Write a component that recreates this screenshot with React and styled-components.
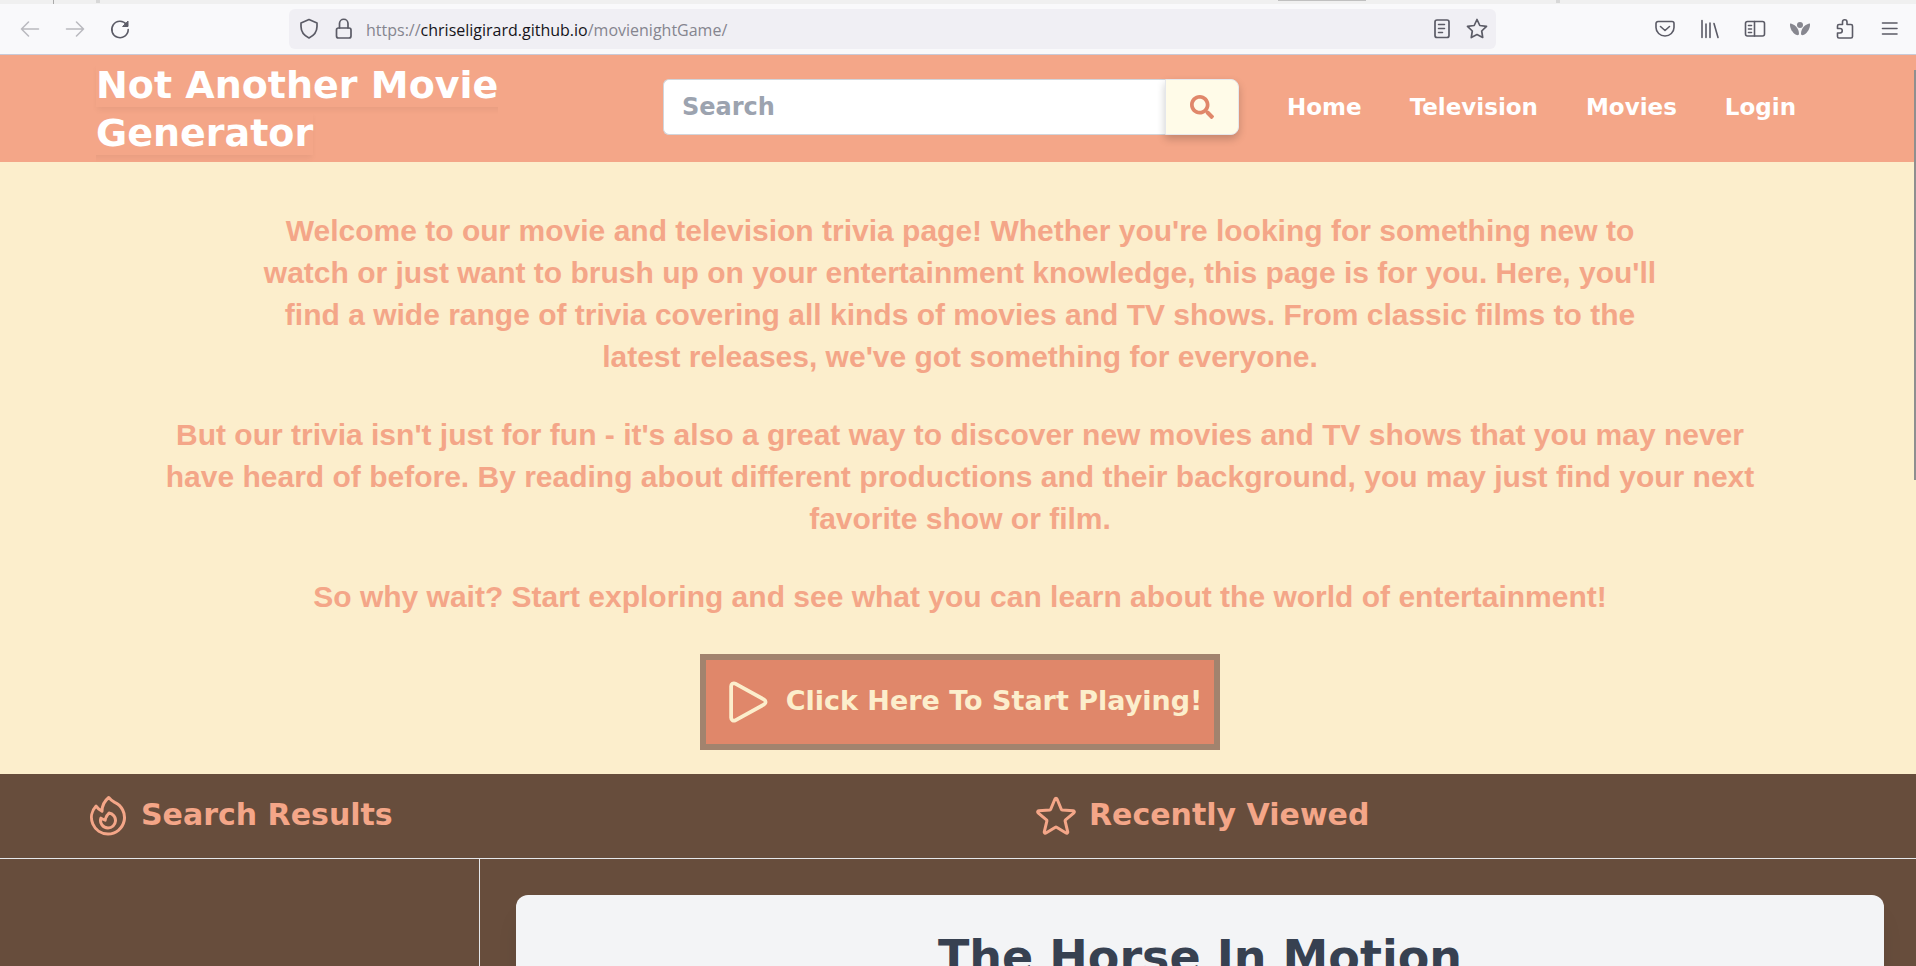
import React from "react";
import styled, { createGlobalStyle } from "styled-components";
import { FaSearch } from "react-icons/fa";

const display = `"DejaVu Sans", Verdana, sans-serif`;

const GlobalStyle = createGlobalStyle`
  *, *::before, *::after { box-sizing: border-box; }
  body { margin: 0; font-family: ${display}; }
  h1, h2, p { margin: 0; }
  button, input { font: inherit; }
`;

const Browser = styled.div`
  display: flex;
  flex-direction: column;
  height: 100vh;
  background: #f9f9fb;
`;

const TabStrip = styled.div`
  display: flex;
  gap: 42px;
  height: 4px;
  padding-left: 53px;
  background: #f0f0f0;
`;

const TabEdge = styled.span`
  width: ${(p) => p.$width}px;
  height: ${(p) => p.$height}px;
  margin-left: ${(p) => (p.$push ? "auto" : 0)};
  margin-right: ${(p) => p.$right || 0}px;
  background: ${(p) => p.$color};
`;

const Toolbar = styled.div`
  display: flex;
  align-items: center;
  height: 51px;
  flex: none;
  padding: 0 14px 0 18px;
  border-bottom: 1px solid #c8cad8;
  color: #5b5b66;
`;

const IconRow = styled.div`
  display: flex;
  flex: none;
  gap: ${(p) => p.$gap}px;
`;

const IconButton = styled.button`
  display: block;
  padding: 0;
  border: 0;
  background: none;
  color: inherit;
  opacity: ${(p) => (p.disabled ? 0.4 : 1)};
  svg { display: block; }
`;

const AddressBar = styled.div`
  display: flex;
  flex: 1;
  align-items: center;
  gap: 10px;
  height: 40px;
  margin: 0 157px;
  padding: 0 7px 0 8px;
  border-radius: 6px;
  background: #f0eff4;
`;

const Address = styled.span`
  flex: 1;
  padding-top: 2px;
  font: 16px "Open Sans", sans-serif;
  color: #85858f;
  b { font-weight: 400; color: #15141a; }
`;

const Viewport = styled.div`
  position: relative;
  display: flex;
  flex: 1;
  min-height: 0;
`;

const Page = styled.div`
  flex: 1;
  overflow-x: hidden;
  overflow-y: auto;
  scrollbar-width: none;
  background: #674d3c;
`;

const PageContent = styled.div`
  margin-right: -4px;
`;

const ScrollThumb = styled.div`
  position: absolute;
  top: 15px;
  right: 0;
  width: 2px;
  height: 45%;
  background: #8f8f8f;
`;

const Header = styled.header`
  display: flex;
  align-items: flex-start;
  min-height: 107px;
  padding: 0 96px;
  background: #f4a688;
  color: #fff;
`;

const Brand = styled.h1`
  flex: 0 1 567px;
  padding: 6px 80px 0 0;
  font-size: 38px;
  font-weight: 700;
  line-height: 48px;
  span { box-shadow: 0 4px 6px -1px rgba(0, 0, 0, 0.05); }
`;

const Tools = styled.div`
  display: flex;
  align-items: center;
  flex: 1;
  gap: 48px;
  padding-top: 24px;
`;

const SearchForm = styled.form`
  display: flex;
  flex: none;
  width: 576px;
  height: 56px;
`;

const SearchInput = styled.input`
  flex: 1;
  min-width: 0;
  padding: 0 18px;
  border: 1px solid #d1d5db;
  border-right: 0;
  border-radius: 6px 0 0 6px;
  background: #fff;
  font-size: 24px;
  color: #374151;
  &::placeholder { color: #9ca3af; opacity: 1; font-weight: 700; }
`;

const SearchButton = styled.button`
  display: flex;
  align-items: center;
  justify-content: center;
  width: 74px;
  border: 1px solid #e5e7eb;
  border-radius: 0 8px 8px 0;
  background: #fffbe8;
  color: #e0876a;
  box-shadow: 0 4px 8px rgba(0, 0, 0, 0.2);
`;

const Nav = styled.nav`
  display: flex;
  gap: 48px;
`;

const NavLink = styled.a`
  font-size: 23px;
  font-weight: 700;
  color: #fff;
  text-decoration: none;
`;

const Hero = styled.section`
  display: flex;
  flex-direction: column;
  align-items: center;
  gap: 36px;
  padding: 48px 24px 24px;
  background: #fceecc;
`;

const Blurb = styled.p`
  max-width: ${(p) => (p.$narrow ? 1420 : 1620)}px;
  font: 700 30px/42px "Liberation Sans", Arial, sans-serif;
  color: #f4a688;
  text-align: center;
`;

const PlayButton = styled.button`
  display: flex;
  align-items: center;
  gap: 8px;
  min-width: 520px;
  height: 96px;
  padding: 0 12px;
  border: 6px solid #a2836e;
  background: #e0876a;
  color: #fceecc;
  font-size: 27px;
  font-weight: 700;
`;

const Label = styled.span`
  padding-bottom: 4px;
`;

const Sections = styled.div`
  display: grid;
  grid-template-columns: 1fr 1fr;
  gap: 60px;
  align-items: center;
  height: 85px;
  padding-left: 84px;
  border-bottom: 1px solid #e5e7eb;
`;

const SectionTitle = styled.h2`
  display: flex;
  align-items: center;
  gap: 9px;
  font-size: 30px;
  font-weight: 700;
  color: #f4a688;
`;

const Results = styled.div`
  display: grid;
  grid-template-columns: 1fr 3fr;
`;

const ResultList = styled.aside`
  border-right: 1px solid #e5e7eb;
`;

const Detail = styled.main`
  padding: 36px;
`;

const Card = styled.article`
  min-height: 480px;
  padding: 32px;
  border-radius: 12px;
  background: #f3f4f6;
  box-shadow: 0 20px 25px -5px rgba(0, 0, 0, 0.1);
`;

const CardTitle = styled.h2`
  font-size: 46px;
  font-weight: 700;
  line-height: 60px;
  color: #374151;
  text-align: center;
`;

const Glyph = ({ children, size = 24, width = 2 }) => (
  <svg width={size} height={size} viewBox="0 0 24 24" fill="none" stroke="currentColor" strokeWidth={width} strokeLinecap="round" strokeLinejoin="round" aria-hidden="true">
    {children}
  </svg>
);

const navItems = ["Home", "Television", "Movies", "Login"];

export default function App() {
  return (
    <Browser>
      <GlobalStyle />
      <TabStrip>
        <TabEdge $width={1} $height={4} $color="#aaa" />
        <TabEdge $width={4} $height={3} $color="#d8d8d8" />
        <TabEdge $width={88} $height={1} $color="#c0c0c0" $push $right={148} />
        <TabEdge $width={4} $height={3} $color="#d8d8d8" $right={356} />
      </TabStrip>
      <Toolbar>
        <IconRow $gap={21}>
          <IconButton aria-label="Back" disabled><Glyph width={1.5}><path d="M20.500 12h-17M10.500 5l-7 7 7 7" /></Glyph></IconButton>
          <IconButton aria-label="Forward" disabled><Glyph width={1.5}><path d="M3.500 12h17M13.500 5l7 7-7 7" /></Glyph></IconButton>
          <IconButton aria-label="Reload"><Glyph width={1.6}><path d="M18.500 7.500a8.200 8.200 0 1 0 1.700 5" /><path d="M20 4.500v5h-5z" fill="currentColor" strokeWidth="1" /></Glyph></IconButton>
        </IconRow>
        <AddressBar>
          <IconRow $gap={11}>
            <Glyph width={1.7}><path d="M12 2.500l8 3.500v3.500c0 5-3 9-8 11.500-5-2.500-8-6.500-8-11.500V6z" /></Glyph>
            <Glyph width={1.7}><rect x="4.500" y="11" width="14.500" height="10" rx="2" /><path d="M7.500 11V6.500a4.200 4.200 0 0 1 8.500 0V11" /></Glyph>
          </IconRow>
          <Address>https://<b>chriseligirard.github.io</b>/movienightGame/</Address>
          <IconRow $gap={11}>
            <IconButton aria-label="Reader view"><Glyph width={1.7}><rect x="5" y="3" width="14" height="17.500" rx="2" /><path d="M8.500 7.500h6M8.500 11.500h6M8.500 15.500h4" strokeWidth="1.500" /></Glyph></IconButton>
            <IconButton aria-label="Bookmark"><Glyph width={1.7}><path d="M12 2.500l2.800 6 6.700.8-4.800 4.700 1 6.500L12 17.600 6.300 20.500l1-6.500-4.800-4.700 6.700-.8z" /></Glyph></IconButton>
          </IconRow>
        </AddressBar>
        <IconRow $gap={21}>
          <IconButton aria-label="Pocket"><Glyph width={1.6}><path d="M5 4.500h14a2 2 0 0 1 2 2v4a9 8.500 0 0 1-18 0v-4a2 2 0 0 1 2-2z" /><path d="M7.500 9.500l4.500 4 4.500-4" /></Glyph></IconButton>
          <IconButton aria-label="Library"><Glyph width={1.6}><path d="M4 3.500v17M8 7v13.500M12 6v14.500M16 6.500l4 14" /></Glyph></IconButton>
          <IconButton aria-label="Sidebars"><Glyph width={1.6}><rect x="2.500" y="4.500" width="19" height="14.500" rx="2" /><path d="M11.500 4.500v14.500M5.500 8.500h3M5.500 12h3M5.500 15.500h3" /></Glyph></IconButton>
          <IconButton aria-label="Extension">
            <Glyph>
              <g fill="#87878f" stroke="none">
                <circle cx="12" cy="8" r="3" />
                <path d="M2 6.500c4 .2 9 4.500 9 10.500 0 1.200-1.500 1.500-3 .8C4.500 16 1.500 11 2 6.500z" />
                <path d="M22 6.500c-4 .2-9 4.500-9 10.500 0 1.200 1.500 1.500 3 .8 3.500-1.800 6.500-6.800 6-11.300z" />
              </g>
            </Glyph>
          </IconButton>
          <IconButton aria-label="Extensions"><Glyph width={1.6}><path d="M4.500 19.500V16H7a2.200 2.200 0 0 0 0-4.500H4.500V9a1.500 1.500 0 0 1 1.500-1.500h3.500V5a2.200 2.200 0 0 1 4.500 0v2.500h4a1.500 1.500 0 0 1 1.500 1.500v10.500a1.500 1.500 0 0 1-1.500 1.500H6a1.500 1.500 0 0 1-1.500-1.500z" /></Glyph></IconButton>
          <IconButton aria-label="Menu"><Glyph width={1.6}><path d="M4.500 6h14.500M4.500 11.500h14.500M4.500 17h14.500" /></Glyph></IconButton>
        </IconRow>
      </Toolbar>
      <Viewport>
        <Page>
          <PageContent>
            <Header>
              <Brand><span>Not Another Movie Generator</span></Brand>
              <Tools>
                <SearchForm role="search" onSubmit={(e) => e.preventDefault()}>
                  <SearchInput type="search" placeholder="Search" aria-label="Search" />
                  <SearchButton aria-label="Submit search"><FaSearch size={24} /></SearchButton>
                </SearchForm>
                <Nav>
                  {navItems.map((item) => <NavLink key={item} href="#">{item}</NavLink>)}
                </Nav>
              </Tools>
            </Header>
            <Hero>
              <Blurb $narrow>
                Welcome to our movie and television trivia page! Whether you're looking for something new to watch or just want to brush up on your entertainment knowledge, this page is for you. Here, you'll find a wide range of trivia covering all kinds of movies and TV shows. From classic films to the latest releases, we've got something for everyone.
              </Blurb>
              <Blurb>
                But our trivia isn't just for fun - it's also a great way to discover new movies and TV shows that you may never have heard of before. By reading about different productions and their background, you may just find your next favorite show or film.
              </Blurb>
              <Blurb>So why wait? Start exploring and see what you can learn about the world of entertainment!</Blurb>
              <PlayButton>
                <Glyph size={60} width={1.5}>
                  <path d="M5.250 5.653c0-.856.917-1.398 1.667-.986l11.540 6.348a1.125 1.125 0 0 1 0 1.971l-11.540 6.347a1.125 1.125 0 0 1-1.667-.985V5.653z" />
                </Glyph>
                <Label>Click Here To Start Playing!</Label>
              </PlayButton>
            </Hero>
            <Sections>
              <SectionTitle>
                <Glyph size={48} width={1.5}>
                  <path d="M15.362 5.214A8.252 8.252 0 0 1 12 21 8.250 8.250 0 0 1 6.038 7.048 8.287 8.287 0 0 0 9 9.600a8.983 8.983 0 0 1 3.361-6.867 8.210 8.210 0 0 0 3 2.480z" />
                  <path d="M12 18a3.750 3.750 0 0 0 .495-7.467 5.990 5.990 0 0 0-1.925 3.546 5.974 5.974 0 0 1-2.133-1A3.750 3.750 0 0 0 12 18z" />
                </Glyph>
                <Label>Search Results</Label>
              </SectionTitle>
              <SectionTitle>
                <Glyph size={48} width={1.5}>
                  <path d="M11.480 3.499a.562.562 0 0 1 1.040 0l2.125 5.111a.563.563 0 0 0 .475.345l5.518.442c.499.040.701.663.321.988l-4.204 3.602a.563.563 0 0 0-.182.557l1.285 5.385a.562.562 0 0 1-.840.610l-4.725-2.885a.563.563 0 0 0-.586 0L6.982 20.540a.562.562 0 0 1-.840-.610l1.285-5.386a.562.562 0 0 0-.182-.557l-4.204-3.602a.563.563 0 0 1 .321-.988l5.518-.442a.563.563 0 0 0 .475-.345L11.480 3.500z" />
                </Glyph>
                <Label>Recently Viewed</Label>
              </SectionTitle>
            </Sections>
            <Results>
              <ResultList aria-label="Search results" />
              <Detail>
                <Card>
                  <CardTitle>The Horse In Motion</CardTitle>
                </Card>
              </Detail>
            </Results>
          </PageContent>
        </Page>
        <ScrollThumb />
      </Viewport>
    </Browser>
  );
}
